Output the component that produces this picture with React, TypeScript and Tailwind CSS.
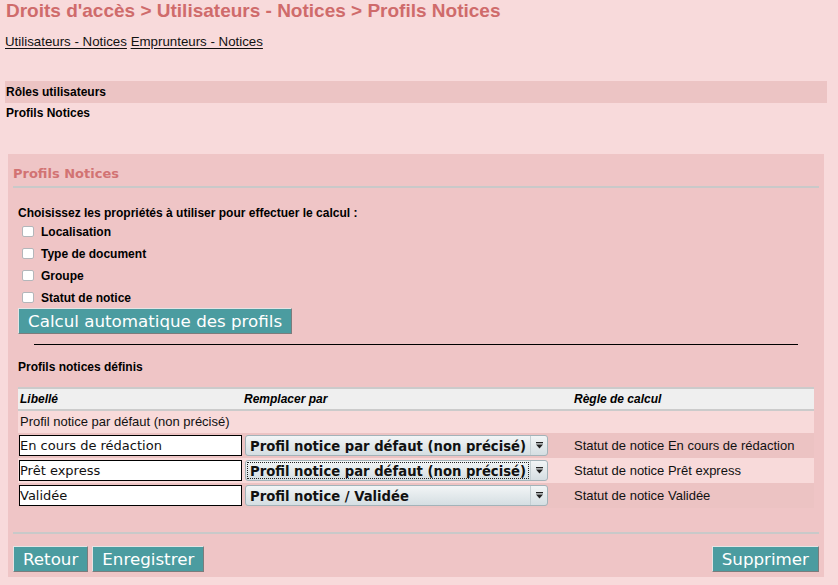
import React from 'react'

const rows = [
  { label: 'En cours de rédaction', value: 'Profil notice par défaut (non précisé)', rule: 'Statut de notice En cours de rédaction', dark: true },
  { label: 'Prêt express', value: 'Profil notice par défaut (non précisé)', rule: 'Statut de notice Prêt express', dark: false, focus: true },
  { label: 'Validée', value: 'Profil notice / Validée', rule: 'Statut de notice Validée', dark: true },
]

const props = ['Localisation', 'Type de document', 'Groupe', 'Statut de notice']

function TealButton({ children, className = '' }: { children: React.ReactNode; className?: string }) {
  return (
    <button
      className={
        'h-[26px] px-[9px] bg-[#4b9ca0] text-white text-[16.7px] leading-[24px] font-["DejaVu_Sans",sans-serif] border border-t-[#e4e4e4] border-l-[#e4e4e4] border-b-[#7c7c7c] border-r-[#7c7c7c] ' +
        className
      }
    >
      {children}
    </button>
  )
}

function FakeSelect({ value, focus }: { value: string; focus?: boolean }) {
  return (
    <div className="flex h-[21px] w-[303px] rounded-[3px] border border-[#a3b3b9] bg-gradient-to-b from-[#f2f5f6] to-[#d5dee2] font-['DejaVu_Sans',sans-serif] text-[13.2px] font-bold leading-[19px] text-[#111]">
      <div className="flex-1 min-w-0 p-[1px]">
        <div
          className={
            'h-full pl-[2px] leading-[17px] whitespace-nowrap overflow-hidden ' +
            (focus ? 'border border-dotted border-[#222]' : 'border border-transparent')
          }
        >
          {value}
        </div>
      </div>
      <div className="w-[17px] border-l border-[#c4cfd3] flex flex-col items-center justify-center">
        <svg width="9" height="7" viewBox="0 0 9 7">
          <rect x="1" y="0" width="7" height="1.3" fill="#222" />
          <path d="M1 2.5 L8 2.5 L4.5 6.5 Z" fill="#222" />
        </svg>
      </div>
    </div>
  )
}

export default function App() {
  return (
    <div className="min-h-[585px] w-[838px] bg-[#f8dadb] font-['Liberation_Sans',Arial,sans-serif] text-black">
      {/* Breadcrumb title */}
      <h1 className="px-[6px] text-[19px] leading-[22px] font-bold text-[#cf6b6b]">
        Droits d'accès &gt; Utilisateurs - Notices &gt; Profils Notices
      </h1>

      {/* Sub links */}
      <div className="mt-[12px] px-[5px] text-[13.3px] leading-[16px] text-[#111]">
        <a className="underline underline-offset-[2px]">Utilisateurs - Notices</a>{' '}
        <a className="underline underline-offset-[2px]">Emprunteurs - Notices</a>
      </div>

      {/* Side menu */}
      <div className="mt-[31px] mx-[5px] w-[822px] text-[12px] font-bold">
        <div className="h-[22px] leading-[22px] px-[1px] bg-[#ecc4c4]">Rôles utilisateurs</div>
        <div className="h-[21px] leading-[21px] px-[1px]">Profils Notices</div>
      </div>

      {/* Panel */}
      <div className="mt-[30px] ml-[8px] w-[816px] bg-[#efc5c6] px-[5px] pt-[12px] pb-[5px]">
        <div className="pb-[4px] border-b-2 border-[#c9c9c9]">
          <h2 className="font-['DejaVu_Sans',sans-serif] text-[13px] leading-[16px] font-bold text-[#d27373]">
            Profils Notices
          </h2>
        </div>

        <div className="px-[5px]">
          <div className="mt-[18px] text-[12px] leading-[14px] font-bold">
            Choisissez les propriétés à utiliser pour effectuer le calcul :
          </div>
          <div className="mt-[1px] text-[12px] font-bold">
            {props.map((p) => (
              <div key={p} className="flex h-[22px] items-start">
                <span className="ml-[4px] mt-[5px] h-[11px] w-[12px] rounded-[2px] border border-[#b3b6ba] bg-white" />
                <span className="ml-[7px] leading-[22px]">{p}</span>
              </div>
            ))}
          </div>
          <div className="-mt-[1px]">
            <TealButton>Calcul automatique des profils</TealButton>
          </div>

          <hr className="mt-[10px] mx-auto w-[96%] border-t border-black" />

          <div className="mt-[15px] text-[12px] leading-[14px] font-bold">Profils notices définis</div>

          {/* Table */}
          <div className="mt-[13px] w-[796px]">
            <div className="grid grid-cols-[225px_329px_1fr] bg-[#efefef] border-y-2 border-[#cbcbcb] text-[12px] leading-[20px] font-bold italic">
              <div className="pl-[2px]">Libellé</div>
              <div className="pl-[1px]">Remplacer par</div>
              <div className="pl-[2px]">Règle de calcul</div>
            </div>
            <div className="h-[22px] bg-[#f8dada] pl-[2px] text-[13px] leading-[22px] text-[#111]">
              Profil notice par défaut (non précisé)
            </div>
            {rows.map((r) => (
              <div
                key={r.label}
                className={
                  'grid grid-cols-[225px_329px_1fr] h-[25px] items-center ' + (r.dark ? 'bg-[#ecc3c3]' : 'bg-[#f8dada]')
                }
              >
                <div className="pl-[1px]">
                  <div className="h-[21px] w-[223px] border border-black bg-white font-['DejaVu_Sans',sans-serif] text-[13px] leading-[19px] text-[#111] whitespace-nowrap overflow-hidden">
                    {r.label}
                  </div>
                </div>
                <div className="pl-[2px]">
                  <FakeSelect value={r.value} focus={r.focus} />
                </div>
                <div className="pl-[2px] text-[13px] leading-[25px] text-[#111] whitespace-nowrap">{r.rule}</div>
              </div>
            ))}
          </div>
        </div>

        <div className="mt-[24px] border-t-2 border-[#c9c9c9]" />

        <div className="mt-[12px] flex items-center">
          <TealButton>Retour</TealButton>
          <TealButton className="ml-[4px]">Enregistrer</TealButton>
          <TealButton className="ml-auto">Supprimer</TealButton>
        </div>
      </div>
    </div>
  )
}
